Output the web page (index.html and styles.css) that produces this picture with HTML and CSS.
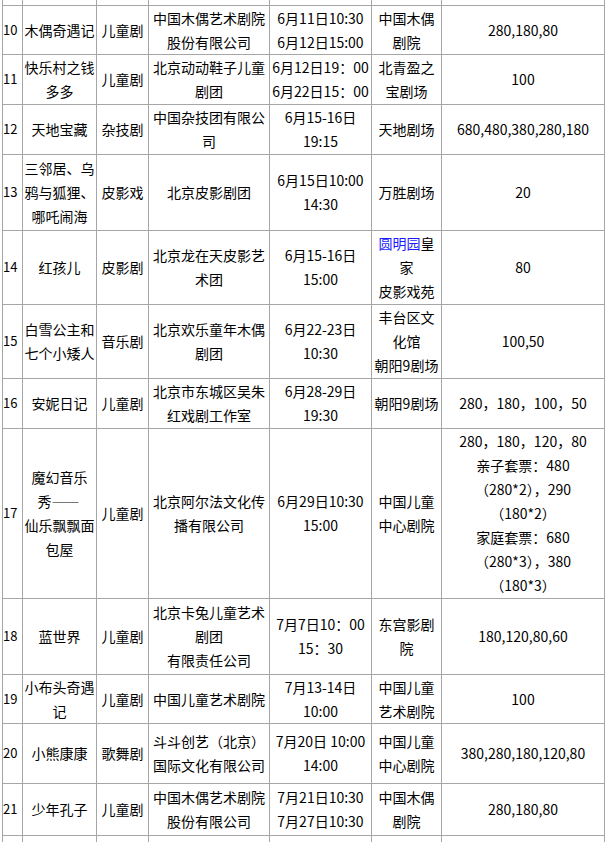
FILE: index.html
```html
<!DOCTYPE html>
<html lang="zh-CN">
<head>
<meta charset="utf-8">
<title>儿童剧演出安排</title>
<link rel="stylesheet" href="styles.css">
</head>
<body>
<div class="page">
<table class="shows">
  <colgroup>
    <col class="c-no"><col class="c-name"><col class="c-type"><col class="c-org"><col class="c-date"><col class="c-venue"><col class="c-price">
  </colgroup>
  <tbody>
    <tr class="stub"><td></td><td></td><td></td><td></td><td></td><td></td><td></td></tr>
    <tr class="h48">
      <td class="no">10</td><td>木偶奇遇记</td><td>儿童剧</td><td>中国木偶艺术剧院<br>股份有限公司</td><td>6月11日10:30<br>6月12日15:00</td><td>中国木偶<br>剧院</td><td>280,180,80</td>
    </tr>
    <tr class="h50">
      <td class="no">11</td><td>快乐村之钱<br>多多</td><td>儿童剧</td><td>北京动动鞋子儿童<br>剧团</td><td>6月12日19：00<br>6月22日15：00</td><td>北青盈之<br>宝剧场</td><td>100</td>
    </tr>
    <tr class="h50">
      <td class="no">12</td><td>天地宝藏</td><td>杂技剧</td><td>中国杂技团有限公<br>司</td><td>6月15-16日<br>19:15</td><td>天地剧场</td><td>680,480,380,280,180</td>
    </tr>
    <tr class="h76">
      <td class="no">13</td><td>三邻居、乌<br>鸦与狐狸、<br>哪吒闹海</td><td>皮影戏</td><td>北京皮影剧团</td><td>6月15日10:00<br>14:30</td><td>万胜剧场</td><td>20</td>
    </tr>
    <tr class="h74">
      <td class="no">14</td><td>红孩儿</td><td>皮影剧</td><td>北京龙在天皮影艺<br>术团</td><td>6月15-16日<br>15:00</td><td><a class="link" href="#">圆明园</a>皇<br>家<br>皮影戏苑</td><td>80</td>
    </tr>
    <tr class="h74">
      <td class="no">15</td><td>白雪公主和<br>七个小矮人</td><td>音乐剧</td><td>北京欢乐童年木偶<br>剧团</td><td>6月22-23日<br>10:30</td><td>丰台区文<br>化馆<br>朝阳9剧场</td><td>100,50</td>
    </tr>
    <tr class="h50">
      <td class="no">16</td><td>安妮日记</td><td>儿童剧</td><td>北京市东城区吴朱<br>红戏剧工作室</td><td>6月28-29日<br>19:30</td><td>朝阳9剧场</td><td>280，180，100，50</td>
    </tr>
    <tr class="h170">
      <td class="no">17</td><td>魔幻音乐<br>秀<span class="dash">——</span><br>仙乐飘飘面<br>包屋</td><td>儿童剧</td><td>北京阿尔法文化传<br>播有限公司</td><td>6月29日10:30<br>15:00</td><td>中国儿童<br>中心剧院</td><td>280，180，120，80<br>亲子套票：480<br>（280*2），290<br>（180*2）<br>家庭套票：680<br>（280*3），380<br>（180*3）</td>
    </tr>
    <tr class="h76">
      <td class="no">18</td><td>蓝世界</td><td>儿童剧</td><td>北京卡兔儿童艺术<br>剧团<br>有限责任公司</td><td>7月7日10：00<br>15：30</td><td>东宫影剧<br>院</td><td>180,120,80,60</td>
    </tr>
    <tr class="h47">
      <td class="no">19</td><td>小布头奇遇<br>记</td><td>儿童剧</td><td>中国儿童艺术剧院</td><td>7月13-14日<br>10:00</td><td>中国儿童<br>艺术剧院</td><td>100</td>
    </tr>
    <tr class="h60">
      <td class="no">20</td><td>小熊康康</td><td>歌舞剧</td><td>斗斗创艺（北京）<br>国际文化有限公司</td><td>7月20日 10:00<br>14:00</td><td>中国儿童<br>中心剧院</td><td>380,280,180,120,80</td>
    </tr>
    <tr class="h52">
      <td class="no">21</td><td>少年孔子</td><td>儿童剧</td><td>中国木偶艺术剧院<br>股份有限公司</td><td>7月21日10:30<br>7月27日10:30</td><td>中国木偶<br>剧院</td><td>280,180,80</td>
    </tr>
    <tr class="h76">
      <td class="no"></td><td></td><td></td><td>博真简·阳光剧团<br>有限公司<br>北京</td><td></td><td></td><td></td>
    </tr>
  </tbody>
</table>
</div>
</body>
</html>
```

FILE: styles.css
```css
html, body {
  margin: 0;
  padding: 0;
  background: #ffffff;
}

.page {
  padding-left: 2px;
  height: 842px;
  overflow: hidden;
}

.shows {
  border-collapse: collapse;
  table-layout: fixed;
  width: 602px;
  font-family: "Noto Sans CJK SC", "Noto Sans", sans-serif;
  font-size: 14px;
  line-height: 24px;
  color: #000000;
}

.c-no { width: 20px; }
.c-name { width: 74px; }
.c-type { width: 52px; }
.c-org { width: 121px; }
.c-date { width: 102px; }
.c-venue { width: 70px; }
.c-price { width: 163px; }

.shows td {
  border: 1px solid #a6a6a6;
  padding: 0 1px;
  text-align: center;
  vertical-align: middle;
  white-space: nowrap;
  overflow: hidden;
}

.shows td.no {
  padding: 0;
  text-align: left;
  font-size: 13px;
}

.dash {
  letter-spacing: 2px;
}

.stub { height: 5px; }
.stub td { border-top: none; }

.h47 { height: 47px; }
.h48 { height: 48px; }
.h50 { height: 50px; }
.h52 { height: 52px; }
.h60 { height: 60px; }
.h74 { height: 74px; }
.h76 { height: 76px; }
.h170 { height: 170px; }

.link {
  color: #1a1aff;
  text-decoration: none;
}
```
